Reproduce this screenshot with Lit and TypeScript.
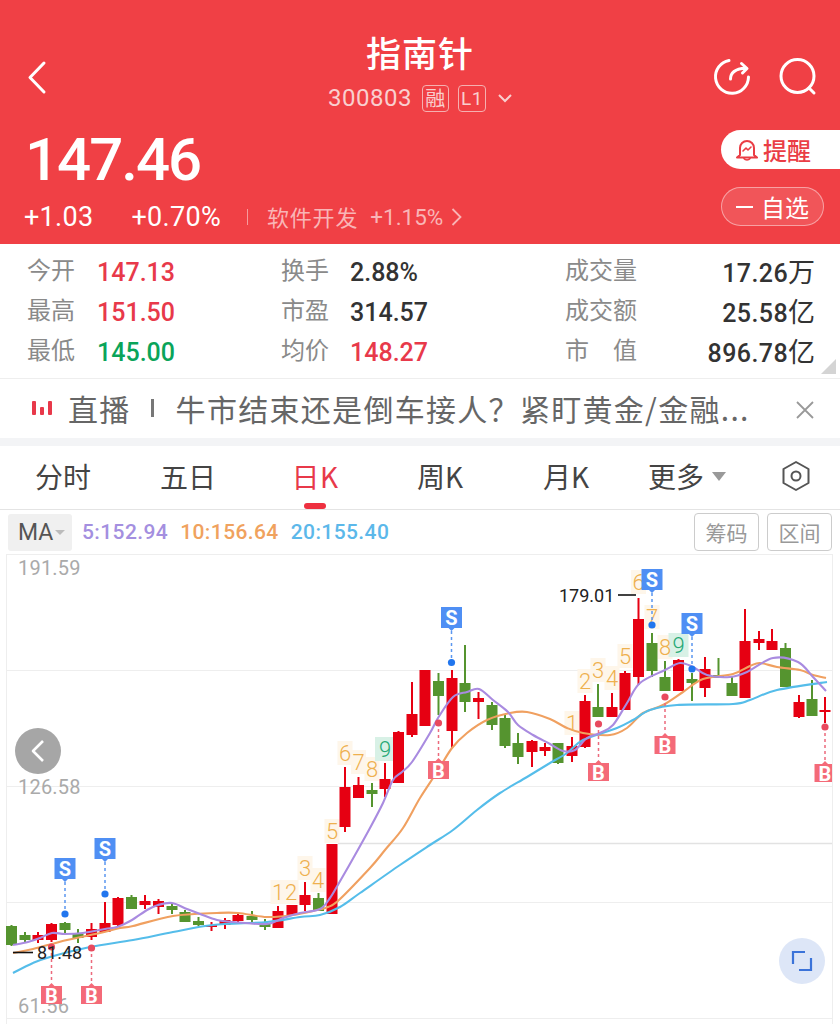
import { LitElement, html, css, svg } from "lit";
import { customElement } from "lit/decorators.js";

// x, bodyTop, bodyBottom, wickTop, wickBottom, up(red)?
type C = [number, number, number, number, number, 0 | 1];
const CANDLES: C[] = [
  [11.5, 926, 945, 925, 946, 0], [25, 935, 940, 932, 943, 0], [38, 935, 940, 932, 943, 1], [51.5, 924, 940, 923, 942, 1],
  [65, 923, 930, 922, 933, 0], [78, 934, 938, 929, 943, 0], [91.5, 929, 937, 923, 940, 1], [105, 923, 932, 902, 932, 1],
  [118, 898, 925, 897, 926, 1], [131.5, 897, 909, 895, 909, 0], [145, 901, 905, 895, 909, 1], [158.5, 901, 907, 899, 914, 1],
  [172, 906, 910, 903, 914, 0], [185, 912, 922, 910, 922, 0], [198.5, 921, 925, 917, 926, 0], [211.5, 925, 927, 922, 931, 1],
  [225, 920, 925, 918, 929, 1], [238, 915, 921, 914, 923, 1], [252, 916, 920, 911, 922, 0], [265, 923, 927, 919, 930, 0],
  [278, 911, 928, 906, 928, 1], [292, 905, 915, 905, 915, 1], [305, 895, 905, 882, 911, 1], [318.5, 898, 911, 893, 911, 0],
  [332, 844, 914, 844, 914, 1], [345, 787, 827, 767, 832, 1], [358.5, 785, 798, 777, 798, 1], [372, 790, 794, 783, 807, 0],
  [385, 779, 789, 763, 797, 1], [398.5, 732, 783, 731, 783, 1], [412, 714, 735, 682, 737, 1], [425, 670, 726, 670, 726, 1],
  [438.5, 681, 696, 673, 715, 0], [452, 678, 731, 670, 748, 1], [465, 683, 702, 645, 712, 0], [478.5, 698, 702, 692, 719, 1],
  [492, 705, 725, 702, 730, 0], [505, 718, 746, 715, 748, 0], [518, 743, 757, 733, 764, 0], [532, 741, 752, 740, 767, 1],
  [545, 747, 751, 743, 756, 1], [558, 743, 763, 743, 764, 0], [572, 746, 756, 737, 762, 1], [585, 701, 747, 695, 748, 1],
  [598, 707, 717, 684, 717, 0], [612, 707, 717, 693, 717, 1], [625, 673, 710, 671, 710, 1], [638.5, 619, 677, 598, 685, 1],
  [652, 643, 671, 633, 677, 0], [665, 677, 691, 661, 691, 0], [678.5, 660, 691, 659, 691, 1], [692, 679, 683, 673, 701, 0],
  [705, 669, 688, 657, 697, 1], [718.5, 675, 678, 658, 678, 0], [732, 683, 696, 677, 696, 0], [745, 641, 698, 609, 698, 1],
  [759, 639, 643, 631, 650, 1], [772, 641, 650, 629, 650, 1], [785.5, 648, 687, 643, 687, 0], [799, 702, 717, 695, 718, 1],
  [812, 699, 716, 680, 716, 0], [825, 710, 712, 697, 723, 1],
];

const MA5 = "13,945 28,942 40,938 52,933 65,934 83,933 105,929 117,927 132,920 147,910 158,905 172,903 187,909 200,914 217,920 233,922 267,924 283,918 300,913 320,909 330,898 339,883 355,855 370,828 383,803 393,780 402,772 412,762 430,733 438,718 453,697 467,692 479,689 493,700 508,712 518,725 533,735 550,744 563,751 575,750 587,738 600,733 613,725 627,703 640,683 665,670 680,663 693,667 707,675 730,677 747,672 773,658 798,662 813,677 826,691";
const MA10 = "13,953 33,949 67,940 100,933 120,928 133,926 173,916 217,913 238,913 267,917 293,915 317,910 328,907 339,900 370,868 385,850 403,828 420,798 437,772 452,748 467,733 487,720 510,713 527,712 550,719 567,728 583,733 610,735 627,728 643,713 663,705 683,692 703,679 733,674 750,666 760,663 777,667 800,670 813,675 826,678";
const MA20 = "13,973 33,963 50,957 90,947 133,940 173,932 213,925 267,922 300,917 320,915 340,907 360,893 400,865 430,845 453,830 477,810 500,793 527,777 550,763 567,753 583,740 617,728 633,720 650,710 677,705 733,704 750,700 777,690 827,682";

function smooth(points: string): string {
  const p = points.split(" ").map((s) => s.split(",").map(Number));
  let d = `M${p[0][0]} ${p[0][1]}`;
  for (let i = 0; i < p.length - 1; i++) {
    const a = p[Math.max(i - 1, 0)], b = p[i], c = p[i + 1], e = p[Math.min(i + 2, p.length - 1)];
    const c1x = b[0] + (c[0] - a[0]) / 6, c1y = b[1] + (c[1] - a[1]) / 6;
    const c2x = c[0] - (e[0] - b[0]) / 6, c2y = c[1] - (e[1] - b[1]) / 6;
    d += `C${c1x.toFixed(1)} ${c1y.toFixed(1)} ${c2x.toFixed(1)} ${c2y.toFixed(1)} ${c[0]} ${c[1]}`;
  }
  return d;
}

const SELLS: [number, number, number][] = [[65, 858, 914], [105, 838, 894], [451.5, 607, 662.5], [652, 569, 625], [692, 613, 669]];
const BUYS: [number, number, number][] = [[51.5, 983, 947], [91.5, 983, 948], [438.5, 758, 723], [598.5, 760, 724], [665, 733, 697], [825, 761, 727]];
const NUMS: [string, number, number][] = [
  ["1", 278, 892], ["2", 291, 892], ["3", 305, 868], ["4", 318, 880], ["5", 332, 831], ["6", 345, 753], ["7", 358.5, 762], ["8", 372, 769],
  ["1", 572, 723], ["2", 585, 681], ["3", 598, 670], ["4", 612, 678], ["5", 625, 656], ["6", 638.5, 582], ["7", 652, 617], ["8", 665, 647],
];
const NINES: [number, number][] = [[385, 749], [678.5, 645]];

@customElement("app-root")
export class AppRoot extends LitElement {
  static styles = css`
    :host { display: block; width: 840px; height: 1024px; overflow: hidden; background: #fff;
      font-family: Roboto, "Noto Sans CJK SC", sans-serif; }
    .cjk { font-family: "Noto Sans CJK SC", sans-serif; }
    .header { height: 244px; background: #f04045; color: #fff; }
    .top { height: 130px; display: grid; grid-template-columns: 1fr auto 1fr; }
    .back { margin: 58px 0 0 24px; display: block; }
    .center { padding-top: 29px; display: flex; flex-direction: column; align-items: center; }
    .title { font: 500 35px/46px "Noto Sans CJK SC", sans-serif; letter-spacing: 1px; }
    .code { margin-top: 9px; height: 28px; display: flex; align-items: center; color: #f9cfcf; font-size: 24px; letter-spacing: 0.5px; }
    .tag { margin-left: 10px; height: 27px; width: 27px; border: 1px solid #f5b0b0; border-radius: 4px; box-sizing: border-box;
      display: flex; align-items: center; justify-content: center; font-size: 20px; line-height: 1; }
    .tag.l1 { margin-left: 9px; width: 28px; font-size: 19px; }
    .chev { margin-left: 12px; }
    .actions { display: flex; justify-content: flex-end; gap: 26px; padding: 57px 22px 0 0; align-items: flex-start; }
    .bottom { display: flex; justify-content: space-between; }
    .price { padding-left: 27px; font: 500 60px/60px Roboto, sans-serif; letter-spacing: -2px; margin-left: -2px; }
    .deltas { margin-top: 12px; padding-left: 24px; height: 30px; display: flex; align-items: center; font-size: 27px; letter-spacing: .3px; }
    .deltas .pct { margin-left: 38px; }
    .deltas .sep { margin-left: 26px; width: 1px; height: 16px; background: #f79a9c; }
    .sector { margin-left: 19px; color: #f9b5b6; display: flex; align-items: center; font-size: 22.5px; letter-spacing: 0; }
    .sector b { font-weight: 400; font-size: 22px; font-family: "Noto Sans CJK SC", sans-serif; letter-spacing: .8px; padding-bottom: 3px; }
    .sector i { font-style: normal; margin-left: 12px; }
    .sector svg { margin-left: 8px; }
    .btns { display: flex; flex-direction: column; gap: 18px; align-items: flex-start; width: 119px; }
    .remind { width: 119px; height: 39px; box-sizing: border-box; background: #fff; color: #ea3d45; border-radius: 20px 0 0 20px;
      display: flex; align-items: center; padding-left: 15px; gap: 5px; font: 500 24px "Noto Sans CJK SC", sans-serif; }
    .fav { width: 103px; height: 39px; box-sizing: border-box; background: rgba(255,255,255,.11); border: 1px solid rgba(255,255,255,.45); border-radius: 20px;
      display: flex; align-items: center; justify-content: center; gap: 8px; font: 400 24px "Noto Sans CJK SC", sans-serif; }
    .fav span { width: 17px; height: 2px; background: #fff; }

    .stats { height: 135px; box-sizing: border-box; padding: 7px 25px 0 27px; display: grid;
      grid-template-columns: 254px 284px 1fr; grid-auto-rows: 40px; border-bottom: 1px solid #eee; position: relative; align-items: center; }
    .cell { display: flex; align-items: center; }
    .cell label { width: 70px; color: #8a8a8a; font: 400 24px "Noto Sans CJK SC", sans-serif; padding-bottom: 6px; }
    .cell.c2 label { width: 69px; }
    .cell.c3 { justify-content: space-between; }
    .cell.c3 label { width: auto; white-space: pre; }
    .val { font-size: 25px; font-weight: 500; color: #333; padding-top: 2px; }
    .cell.c3 .val { letter-spacing: .4px; }
    .val small { font: 400 27px "Noto Sans CJK SC", sans-serif; letter-spacing: 0; line-height: 1; }
    .red { color: #e8394a; } .green { color: #0aa45a; }
    .corner { position: absolute; right: 4px; bottom: 4px; width: 0; height: 0; border-left: 15px solid transparent; border-bottom: 15px solid #d4d4d4; }

    .news { height: 59px; box-sizing: border-box; padding: 0 0 2px 32px; display: flex; align-items: center; color: #666; position: relative;
      font: 400 30px "Noto Sans CJK SC", sans-serif; letter-spacing: 1.3px; white-space: nowrap; }
    .bars { display: flex; align-items: flex-end; gap: 4px; height: 14px; margin-right: 16px; }
    .bars span { width: 4px; background: #e8394a; border-radius: 1px; }
    .news .bar { margin: 0 22px 0 20px; width: 3px; height: 18px; background: #777; }
    .news .x { position: absolute; right: 26px; top: 22px; }
    .gap { height: 8px; background: #f3f4f6; }

    .tabs { height: 64px; box-sizing: border-box; border-bottom: 1px solid #e4e4e4; display: grid;
      grid-template-columns: 126px 124px 130px 120px 132px 110px 98px; align-items: center; color: #444; font: 400 28px "Noto Sans CJK SC", sans-serif; }
    .tab { position: relative; height: 63px; box-sizing: border-box; padding-bottom: 3px; display: flex; align-items: center; justify-content: center; white-space: nowrap; }
    .tab.on { color: #e8394a; letter-spacing: .5px; }
    .tab.on::after { content: ""; position: absolute; left: 54px; bottom: 0; width: 22px; height: 6px; border-radius: 3px; background: #ee3040; }
    .tab.more svg { margin-left: 8px; }
    .tab.set { padding-left: 10px; }

    .tools { height: 44px; display: flex; align-items: center; padding: 0 8px; box-sizing: border-box; }
    .ma { width: 64px; height: 37px; background: #f0f0f0; border-radius: 3px; display: flex; align-items: center; padding-left: 10px; box-sizing: border-box; color: #555; font-size: 23px; gap: 2px; }
    .tri { width: 0; height: 0; border-left: 5px solid transparent; border-right: 5px solid transparent; border-top: 5px solid #bbb; }
    .legend { font-size: 21px; margin-left: 10px; font-weight: 500; letter-spacing: .4px; }
    .legend + .legend { margin-left: 12px; }
    .m5 { color: #a48fe0; } .m10 { color: #f0a25e; } .m20 { color: #5cb8ea; }
    .spacer { flex: 1; }
    .tbtn { width: 65px; height: 38px; box-sizing: border-box; border: 1px solid #ccc; border-radius: 4px; color: #999; display: flex; align-items: center; justify-content: center; font: 400 21px "Noto Sans CJK SC", sans-serif; }
    .tbtn + .tbtn { margin-left: 8px; }
    .chart { display: block; }
    .ax { font: 400 20px Roboto, sans-serif; fill: #aaa; letter-spacing: 0.2px; }
    .ext { font: 400 18px Roboto, sans-serif; fill: #222; }
    .badge { font: 700 20px Roboto, sans-serif; fill: #fff; text-anchor: middle; }
    .num { font: 300 22px Roboto, sans-serif; fill: #eeb04e; text-anchor: middle; }
    .num.g { fill: #25a874; }
  `;

  private chart() {
    const sellBadge = (x: number, t: number, dot: number) => svg`
      <line x1=${x} x2=${x} y1=${t + 24} y2=${dot} stroke="#5b97f0" stroke-width="1.5" stroke-dasharray="3 3"/>
      <circle cx=${x} cy=${dot} r="3.6" fill="#2176ee"/>
      <path d="M${x - 10.5} ${t}h21v21h-7.5l-3 3-3-3h-7.5z" fill="#4f8ff4"/>
      <text class="badge" x=${x} y=${t + 18}>S</text>`;
    const buyBadge = (x: number, t: number, dot: number) => svg`
      <line x1=${x} x2=${x} y1=${dot} y2=${t} stroke="#ec6a7c" stroke-width="1.5" stroke-dasharray="3 3"/>
      <circle cx=${x} cy=${dot} r="3.6" fill="#e84a5e"/>
      <path d="M${x - 10.5} ${t + 3}h7.5l3-3 3 3h7.5v18h-21z" fill="#f46a78"/>
      <text class="badge" x=${x} y=${t + 20}>B</text>`;
    return html`<svg class="chart" width="840" height="470" viewBox="0 554 840 470">
      <defs><clipPath id="plot"><rect x="6" y="554" width="826" height="470"/></clipPath></defs>
      ${[554, 670, 786, 902, 1018].map((y) => svg`<line x1="6" x2="832" y1=${y + 0.5} y2=${y + 0.5} stroke="#eeeeee"/>`)}
      <line x1="338" x2="832" y1="843.5" y2="843.5" stroke="#e2e2e2" stroke-width="1.5"/>
      <line x1="6.5" x2="6.5" y1="554" y2="1024" stroke="#eeeeee"/>
      <line x1="832.5" x2="832.5" y1="554" y2="1024" stroke="#eeeeee"/>
      <text class="ax" x="18" y="575">191.59</text>
      <text class="ax" x="18" y="794">126.58</text>
      <text class="ax" x="18" y="1013">61.56</text>
      ${NUMS.map(([, x, y]) => svg`<rect x=${x - 7.5} y=${y - 12} width="15" height="24" fill="#fef6ea"/>`)}
      ${NINES.map(([x, y]) => svg`<rect x=${x - 10} y=${y - 12} width="20" height="24" fill="#d8f1e6"/>`)}
      ${CANDLES.map(([x, t, b, wt, wb, up]) => {
        const col = up ? "#e60012" : "#55942f";
        return svg`<line x1=${x} x2=${x} y1=${wt} y2=${wb} stroke=${col} stroke-width="2"/>
          <rect x=${x - 5.5} y=${t} width="11" height=${b - t} fill=${col}/>`;
      })}
      <path d=${smooth(MA10)} fill="none" stroke="#f0a060" stroke-width="2.1"/>
      <path d=${smooth(MA20)} fill="none" stroke="#55bdea" stroke-width="2.1"/>
      <path d=${smooth(MA5)} fill="none" stroke="#a98be0" stroke-width="2.1"/>
      ${NUMS.map(([n, x, y]) => svg`<text class="num" x=${x} y=${y + 8}>${n}</text>`)}
      ${NINES.map(([x, y]) => svg`<text class="num g" x=${x} y=${y + 8}>9</text>`)}
      <g clip-path="url(#plot)">
        ${SELLS.map(([x, t, d]) => sellBadge(x, t, d))}
        ${BUYS.map(([x, t, d]) => buyBadge(x, t, d))}
      </g>
      <text class="ext" x="559" y="602">179.01</text>
      <line x1="618" x2="636" y1="595" y2="595" stroke="#111" stroke-width="1.6"/>
      <line x1="13" x2="33" y1="952.5" y2="952.5" stroke="#111" stroke-width="1.6"/>
      <text class="ext" x="37" y="959">81.48</text>
      <circle cx="38" cy="751" r="23" fill="#a6a6a6"/>
      <path d="M43 741l-10 10 10 10" fill="none" stroke="#fff" stroke-width="2.6" stroke-linejoin="round"/>
      <circle cx="802" cy="961" r="23" fill="#dde6f7"/>
      <path d="M793 964v-12h12M811 958v12h-12" fill="none" stroke="#3b73d9" stroke-width="2.2"/>
    </svg>`;
  }

  render() {
    return html`
      <div class="header">
        <div class="top">
          <div>
            <svg class="back" width="24" height="40" viewBox="0 0 24 40"><path d="M20 5L6 19.500L20 34" fill="none" stroke="#fff" stroke-width="3" stroke-linecap="round" stroke-linejoin="round"/></svg>
          </div>
          <div class="center">
            <div class="title">指南针</div>
            <div class="code">300803
              <span class="tag cjk">融</span><span class="tag l1">L1</span>
              <svg class="chev" width="14" height="10" viewBox="0 0 14 10"><path d="M1 2l6 6 6-6" fill="none" stroke="#f9cfcf" stroke-width="2"/></svg>
            </div>
          </div>
          <div class="actions">
            <svg width="40" height="40" viewBox="0 0 40 40" fill="none" stroke="#fff" stroke-width="3" stroke-linecap="round" stroke-linejoin="round">
              <path d="M17 3.500A16.500 16.500 0 1 0 36.500 20"/>
              <path d="M18.500 22c0-5 3-10 15-11M29.500 6.500l5.500 5-4.500 4.500"/>
            </svg>
            <svg width="40" height="40" viewBox="0 0 40 40" fill="none" stroke="#fff" stroke-width="3" stroke-linecap="round">
              <circle cx="19.500" cy="19" r="16.500"/><path d="M31 31l5 5"/>
            </svg>
          </div>
        </div>
        <div class="bottom">
          <div>
            <div class="price">147.46</div>
            <div class="deltas">
              <span>+1.03</span><span class="pct">+0.70%</span><span class="sep"></span>
              <span class="sector"><b>软件开发</b><i>+1.15%</i>
                <svg width="11" height="18" viewBox="0 0 11 18"><path d="M1.500 1l8 8-8 8" fill="none" stroke="#f9b5b6" stroke-width="1.800"/></svg>
              </span>
            </div>
          </div>
          <div class="btns">
            <div class="remind">
              <svg width="22" height="24" viewBox="0 0 22 24" fill="none" stroke="#ea3d45" stroke-width="2" stroke-linejoin="round" stroke-linecap="round">
                <path d="M4 17V10a7 7 0 0 1 14 0v7l3 2.500H1z"/><path d="M8 20.500a3.500 3 0 0 0 6 0M7 13l3-3 2 2 3-3" stroke-width="1.600"/>
              </svg>
              提醒
            </div>
            <div class="fav"><span></span>自选</div>
          </div>
        </div>
      </div>

      <div class="stats">
        <div class="cell"><label>今开</label><span class="val red">147.13</span></div>
        <div class="cell c2"><label>换手</label><span class="val">2.88%</span></div>
        <div class="cell c3"><label>成交量</label><span class="val">17.26<small>万</small></span></div>
        <div class="cell"><label>最高</label><span class="val red">151.50</span></div>
        <div class="cell c2"><label>市盈</label><span class="val">314.57</span></div>
        <div class="cell c3"><label>成交额</label><span class="val">25.58<small>亿</small></span></div>
        <div class="cell"><label>最低</label><span class="val green">145.00</span></div>
        <div class="cell c2"><label>均价</label><span class="val red">148.27</span></div>
        <div class="cell c3"><label>市　值</label><span class="val">896.78<small>亿</small></span></div>
        <span class="corner"></span>
      </div>

      <div class="news">
        <span class="bars"><span style="height:14px"></span><span style="height:8px"></span><span style="height:14px"></span></span>
        直播<span class="bar"></span>牛市结束还是倒车接人？紧盯黄金/金融...
        <svg class="x" width="18" height="18" viewBox="0 0 18 18"><path d="M1 1l16 16M17 1L1 17" stroke="#999" stroke-width="1.800"/></svg>
      </div>
      <div class="gap"></div>

      <div class="tabs">
        <div class="tab">分时</div>
        <div class="tab">五日</div>
        <div class="tab on">日K</div>
        <div class="tab">周K</div>
        <div class="tab">月K</div>
        <div class="tab more">更多<svg width="14" height="9" viewBox="0 0 14 9"><path d="M0 0h14L7 9z" fill="#999"/></svg></div>
        <div class="tab set"><svg width="30" height="32" viewBox="0 0 30 32" fill="none" stroke="#555" stroke-width="2"><path d="M15 2l12.500 7v14L15 30 2.500 23V9z" stroke-linejoin="round"/><circle cx="15" cy="16" r="4.500"/></svg></div>
      </div>

      <div class="tools">
        <div class="ma">MA<span class="tri"></span></div>
        <span class="legend m5">5:152.94</span>
        <span class="legend m10">10:156.64</span>
        <span class="legend m20">20:155.40</span>
        <span class="spacer"></span>
        <div class="tbtn">筹码</div>
        <div class="tbtn">区间</div>
      </div>
      ${this.chart()}
    `;
  }
}
